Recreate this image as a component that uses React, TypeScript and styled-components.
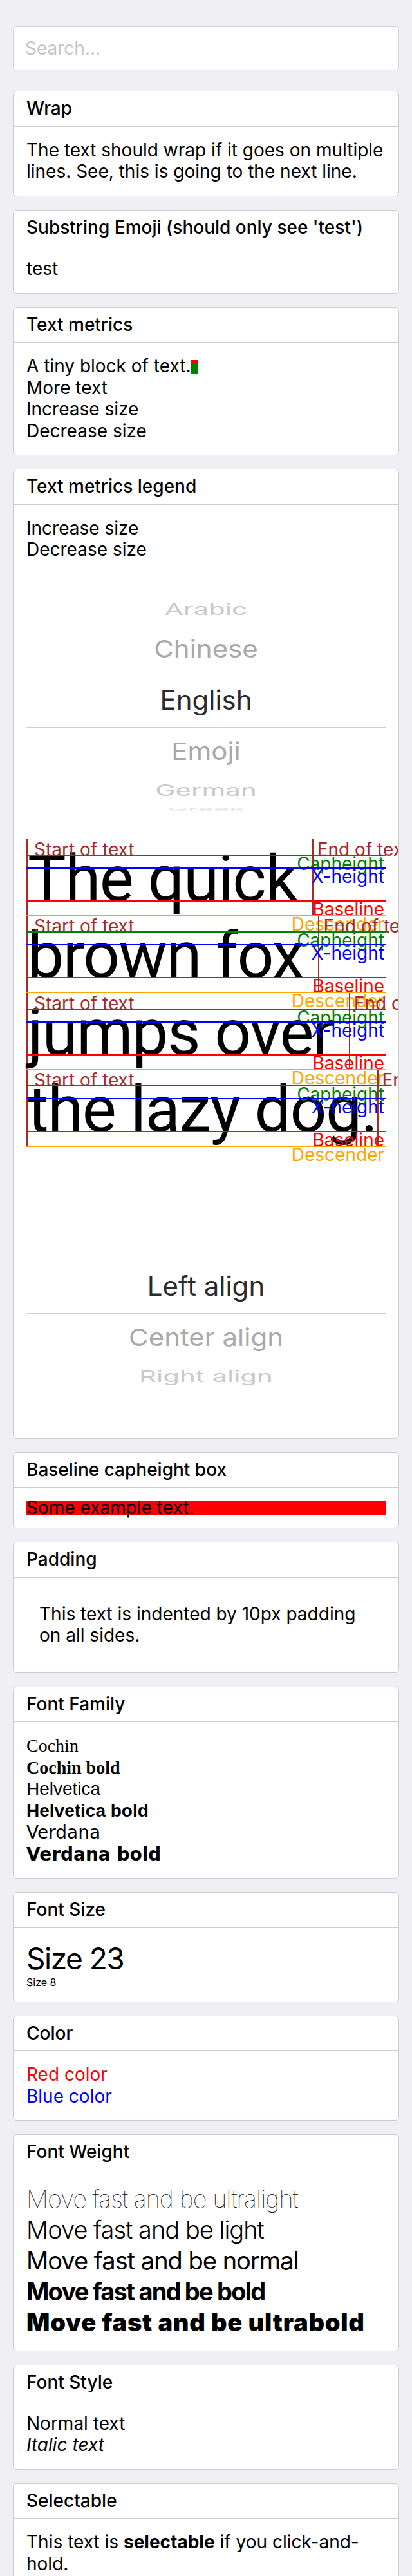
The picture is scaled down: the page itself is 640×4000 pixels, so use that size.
import React from "react";
import styled, { createGlobalStyle } from "styled-components";

const MAIN_FONT = `Inter, "Noto Sans", sans-serif`;

const GlobalStyle = createGlobalStyle`
  body {
    margin: 0;
    background: #efeff4;
    font-family: ${MAIN_FONT};
    color: #000;
  }
`;

const Page = styled.div`
  padding: 41px 20px 0;
`;

const SearchInput = styled.input`
  display: block;
  box-sizing: border-box;
  width: 100%;
  height: 68px;
  margin: 0 0 32px;
  padding: 0 18px;
  border: 1px solid #d4d4d8;
  border-radius: 5px;
  background: #fff;
  font-family: ${MAIN_FONT};
  font-size: 28px;
  outline: none;

  &::placeholder {
    color: #c4c4c9;
  }
`;

const Card = styled.section`
  background: #fff;
  border: 1px solid #cdcdd1;
  border-radius: 6px;
  overflow: hidden;
  margin-bottom: 21px;
`;

const CardTitle = styled.div`
  padding: 10px 20px;
  border-bottom: 1px solid #cdcdd1;
  font-size: 28px;
  line-height: 33.5px;
  font-weight: 500;
`;

const CardBody = styled.div`
  padding: 20px;
  font-size: 28px;
  line-height: 33.5px;
`;

const Indented = styled.div`
  padding: 20px;
`;

const TextLine = styled.div<{
  $color?: string;
  $size?: number;
  $weight?: number;
  $italic?: boolean;
  $family?: string;
  $lh?: number;
  $tracking?: number;
}>`
  color: ${({ $color }) => $color || "#000"};
  font-size: ${({ $size }) => $size || 28}px;
  line-height: ${({ $size, $lh }) => $lh || Math.round((($size || 28) * 1.193) * 10) / 10}px;
  font-weight: ${({ $weight }) => $weight || 400};
  font-style: ${({ $italic }) => ($italic ? "italic" : "normal")};
  font-family: ${({ $family }) => $family || MAIN_FONT};
  letter-spacing: ${({ $tracking }) => $tracking || 0}px;
`;

const MetricMarker = styled.span`
  display: inline-block;
  width: 10px;
  height: 21px;
  vertical-align: -2px;
  background: linear-gradient(#ff0000 0 5px, #008000 5px);
`;

/* picker wheel */

const Wheel = styled.div`
  display: grid;
  place-items: center;
  height: 432px;
  overflow: hidden;

  & > * {
    grid-area: 1 / 1;
  }
`;

const SelectionBand = styled.div`
  box-sizing: border-box;
  width: 100%;
  height: 87px;
  border-top: 1px solid #d0d0d0;
  border-bottom: 1px solid #d0d0d0;
`;

const toneColors = ["#2b2b2b", "#a9a9a9", "#c9c9c9", "#e2e2e2"];

const WheelItem = styled.div<{ $tone: number }>`
  font-size: 42px;
  line-height: 50px;
  white-space: nowrap;
  color: ${({ $tone }) => toneColors[$tone]};
`;

const PICK_R = 172;
const PICK_STEP = 27.5;

const Picker: React.FC<{ items: string[]; selected: number }> = ({ items, selected }) => (
  <Wheel>
    <SelectionBand />
    {items.map((label, i) => {
      const d = i - selected;
      const deg = d * PICK_STEP;
      if (Math.abs(deg) >= 90) return null;
      const a = (deg * Math.PI) / 180;
      return (
        <WheelItem
          key={label}
          $tone={Math.min(Math.abs(d), 3)}
          style={{ transform: `translateY(${PICK_R * Math.sin(a)}px) scaleY(${Math.cos(a)})` }}
        >
          {label}
        </WheelItem>
      );
    })}
  </Wheel>
);

/* text metrics legend */

const MetricsBlock = styled.div`
  display: flex;
  flex-direction: column;
`;

const MetricRow = styled.div`
  position: relative;
  display: flex;
  height: 119.5px;
`;

const BigText = styled.div`
  position: relative;
  box-sizing: border-box;
  height: 119.5px;
  font-family: Roboto, sans-serif;
  font-size: 100px;
  line-height: 123.5px;
  letter-spacing: -1.5px;
  white-space: pre;
  border-left: 2px solid #a52a2a;
  border-right: 2px solid #a52a2a;
`;

const MetricLabel = styled.span<{ $color: string }>`
  position: absolute;
  top: 0;
  font-family: ${MAIN_FONT};
  font-size: 28px;
  line-height: 33.5px;
  letter-spacing: 0;
  white-space: nowrap;
  color: ${({ $color }) => $color};
`;

const StartLabel = styled(MetricLabel)`
  left: 10px;
`;

const EndLabel = styled(MetricLabel)`
  left: calc(100% + 8px);
`;

const GuideLine = styled.div<{ $color: string; $top: number }>`
  position: absolute;
  left: 0;
  right: 0;
  top: ${({ $top }) => $top - 1}px;
  height: 2px;
  background: ${({ $color }) => $color};
`;

const GuideLabel = styled.span<{ $color: string; $top: number }>`
  position: absolute;
  right: 2px;
  top: ${({ $top }) => $top - 3}px;
  font-size: 28px;
  line-height: 33.5px;
  white-space: nowrap;
  color: ${({ $color }) => $color};
`;

const guides = [
  { name: "Capheight", color: "#008000", top: 25 },
  { name: "X-height", color: "#0000ff", top: 45 },
  { name: "Baseline", color: "#ff0000", top: 96 },
  { name: "Descender", color: "#ffa500", top: 119 },
];

const metricLines = ["The quick ", "brown fox ", "jumps over ", "the lazy dog."];

const TextMetrics = () => (
  <MetricsBlock>
    {metricLines.map((line) => (
      <MetricRow key={line}>
        <BigText>
          {line}
          <StartLabel $color="#a52a2a">Start of text</StartLabel>
          <EndLabel $color="#a52a2a">End of text</EndLabel>
        </BigText>
        {guides.map((g) => (
          <React.Fragment key={g.name}>
            <GuideLine $color={g.color} $top={g.top} />
            <GuideLabel $color={g.color} $top={g.top}>
              {g.name}
            </GuideLabel>
          </React.Fragment>
        ))}
      </MetricRow>
    ))}
  </MetricsBlock>
);

/* baseline capheight box */

const CapBox = styled.div`
  height: 22px;
  line-height: 22px;
  background: #ff0000;
  white-space: nowrap;
`;

const Bold = styled.b`
  font-weight: 700;
`;

const Block: React.FC<{ title: string; children: React.ReactNode }> = ({ title, children }) => (
  <Card>
    <CardTitle>{title}</CardTitle>
    <CardBody>{children}</CardBody>
  </Card>
);

const families = [
  { label: "Cochin", family: `"Liberation Serif", serif`, weight: 400 },
  { label: "Cochin bold", family: `"Liberation Serif", serif`, weight: 700 },
  { label: "Helvetica", family: `"Liberation Sans", sans-serif`, weight: 400 },
  { label: "Helvetica bold", family: `"Liberation Sans", sans-serif`, weight: 700 },
  { label: "Verdana", family: `"DejaVu Sans", sans-serif`, weight: 400 },
  { label: "Verdana bold", family: `"DejaVu Sans", sans-serif`, weight: 700 },
];

const weights = [
  { label: "Move fast and be ultralight", weight: 100, tracking: -1 },
  { label: "Move fast and be light", weight: 300, tracking: -1 },
  { label: "Move fast and be normal", weight: 400, tracking: -1 },
  { label: "Move fast and be bold", weight: 700, tracking: -1.8 },
  { label: "Move fast and be ultrabold", weight: 900, tracking: 0.8 },
];

export default function App() {
  return (
    <>
      <GlobalStyle />
      <Page>
        <SearchInput placeholder="Search..." />

        <Block title="Wrap">
          The text should wrap if it goes on multiple lines. See, this is going to the next line.
        </Block>

        <Block title="Substring Emoji (should only see 'test')">test</Block>

        <Block title="Text metrics">
          <div>
            A tiny block of text.
            <MetricMarker />
          </div>
          <div>More text</div>
          <div>Increase size</div>
          <div>Decrease size</div>
        </Block>

        <Block title="Text metrics legend">
          <div>Increase size</div>
          <div>Decrease size</div>
          <Picker
            items={["Arabic", "Chinese", "English", "Emoji", "German", "Greek", "Hebrew", "Hindi"]}
            selected={2}
          />
          <TextMetrics />
          <Picker items={["Left align", "Center align", "Right align"]} selected={0} />
        </Block>

        <Block title="Baseline capheight box">
          <CapBox>Some example text.</CapBox>
        </Block>

        <Block title="Padding">
          <Indented>This text is indented by 10px padding on all sides.</Indented>
        </Block>

        <Block title="Font Family">
          {families.map((f) => (
            <TextLine key={f.label} $family={f.family} $weight={f.weight} $lh={33.7}>
              {f.label}
            </TextLine>
          ))}
        </Block>

        <Block title="Font Size">
          <TextLine $size={46} $tracking={-1.5}>
            Size 23
          </TextLine>
          <TextLine $size={16}>Size 8</TextLine>
        </Block>

        <Block title="Color">
          <TextLine $color="#ff0000">Red color</TextLine>
          <TextLine $color="#0000ff">Blue color</TextLine>
        </Block>

        <Block title="Font Weight">
          {weights.map((w) => (
            <TextLine key={w.label} $size={38} $lh={48} $tracking={w.tracking} $weight={w.weight}>
              {w.label}
            </TextLine>
          ))}
        </Block>

        <Block title="Font Style">
          <TextLine>Normal text</TextLine>
          <TextLine $italic>Italic text</TextLine>
        </Block>

        <Block title="Selectable">
          This text is <Bold>selectable</Bold> if you click-and-hold.
        </Block>
      </Page>
    </>
  );
}
